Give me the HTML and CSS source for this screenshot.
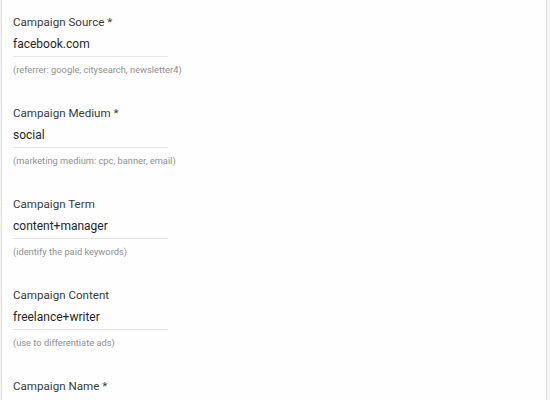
FILE: index.html
```html
<!DOCTYPE html>
<html>
<head>
<meta charset="utf-8">
<link rel="stylesheet" href="styles.css">
</head>
<body>
<div class="panel">
  <div class="field">
    <div class="label">Campaign Source *</div>
    <div class="value">facebook.com</div>
    <div class="hint">(referrer: google, citysearch, newsletter4)</div>
  </div>
  <div class="field">
    <div class="label">Campaign Medium *</div>
    <div class="value">social</div>
    <div class="hint">(marketing medium: cpc, banner, email)</div>
  </div>
  <div class="field">
    <div class="label">Campaign Term</div>
    <div class="value">content+manager</div>
    <div class="hint">(identify the paid keywords)</div>
  </div>
  <div class="field">
    <div class="label">Campaign Content</div>
    <div class="value">freelance+writer</div>
    <div class="hint">(use to differentiate ads)</div>
  </div>
  <div class="field">
    <div class="label">Campaign Name *</div>
  </div>
</div>
</body>
</html>
```

FILE: styles.css
```css
html, body {
  margin: 0;
  padding: 0;
  background: #f4f4f4;
  height: 400px;
  overflow: hidden;
}
.panel {
  margin-left: 1px;
  width: 546px;
  height: 400px;
  overflow: hidden;
  background: #fefefe;
  border-left: 1px solid #e2e2e2;
  border-right: 1px solid #e2e2e2;
  padding: 15px 0 0 11px;
  box-sizing: border-box;
  font-family: Roboto, "Liberation Sans", sans-serif;
}
.field {
  margin-bottom: 30px;
}
.label {
  font-size: 11.6px;
  line-height: 14px;
  color: #3a3a3a;
}
.value {
  margin-top: 7px;
  width: 155px;
  font-size: 12px;
  line-height: 16px;
  color: #262626;
  padding-bottom: 4px;
  border-bottom: 1px solid #e3e3e3;
}
.hint {
  margin-top: 7px;
  font-size: 9.3px;
  line-height: 12px;
  color: #909090;
}
```
